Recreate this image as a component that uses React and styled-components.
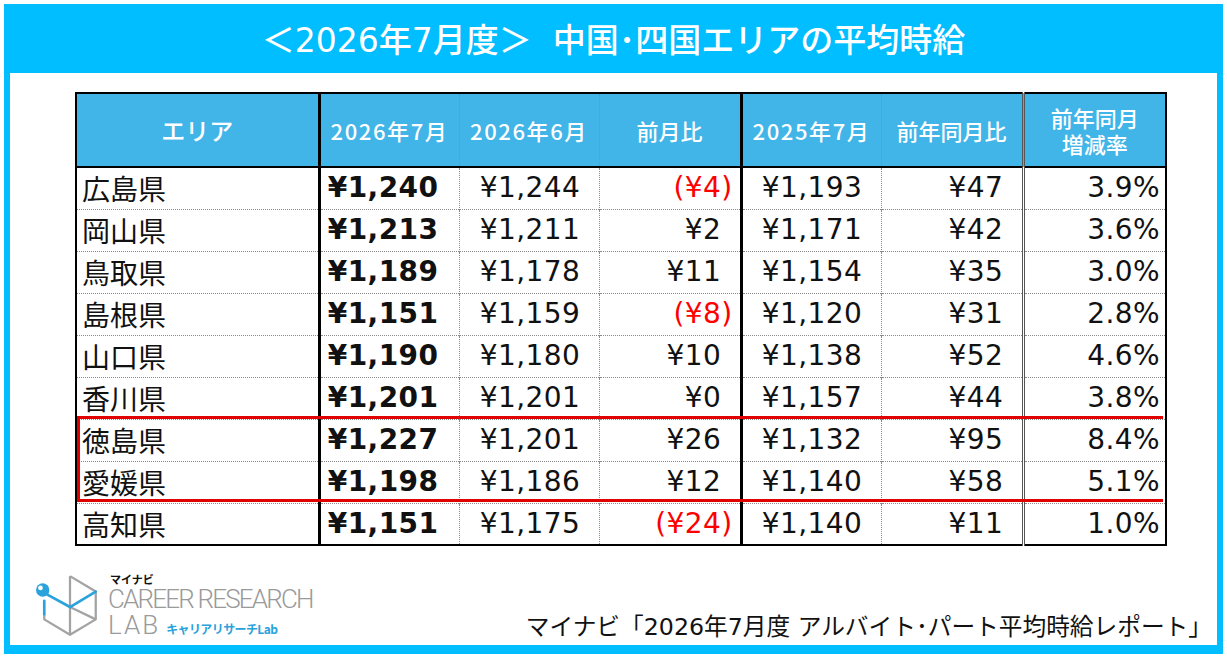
import React from 'react';
import styled, { createGlobalStyle } from 'styled-components';

const GlobalStyle = createGlobalStyle`
  html, body { margin: 0; padding: 0; background: #fff; }
  body { font-family: "Noto Sans CJK JP", "Noto Sans", sans-serif; color: #111; }
  * { box-sizing: border-box; }
`;

const CYAN = '#00BEFF';
const HEAD = '#41B5E8';
const MIXED = '"DejaVu Sans", "Noto Sans CJK JP", sans-serif';

const Page = styled.div`
  width: 1227px;
  height: 657px;
  padding: 4px 4px 0 4px;
  background: #fff;
`;

const Frame = styled.div`
  width: 1219px;
  height: 650px;
  border: 6px solid ${CYAN};
  border-top: 0;
  border-bottom-width: 9px;
  display: flex;
  flex-direction: column;
  background: #fff;
`;

const TitleBar = styled.div`
  height: 69px;
  background: ${CYAN};
  display: flex;
  align-items: center;
  justify-content: center;
  color: #fff;
  font-family: ${MIXED};
  font-size: 33px;
  font-weight: 500;
  white-space: pre;
  padding-bottom: 2px;
`;

const Content = styled.div`
  flex: 1;
  display: flex;
  flex-direction: column;
  padding: 19px 0 0 65px;
`;

const TableWrap = styled.div`
  position: relative;
  width: 1090px;
`;

const Table = styled.table`
  border-collapse: collapse;
  table-layout: fixed;
  width: 1090px;
  border: 2px solid #000;
`;

const sepStyle = {
  thick: '3px solid #000',
  dotted: '1px dotted #8a8a8a',
  double: '3px double #555',
  none: 'none',
};

const Th = styled.th`
  height: 74px;
  background: ${HEAD};
  color: #fff;
  font-weight: 500;
  font-size: ${(p) => p.$size || 22}px;
  letter-spacing: ${(p) => p.$ls || 0}px;
  line-height: 26px;
  text-align: center;
  padding: 0;
  border-right: ${(p) => sepStyle[p.$sep]};
  border-bottom: 2px solid #000;
`;

const Td = styled.td`
  height: 42px;
  padding: 0 ${(p) => p.$pr ?? 7}px 0 ${(p) => p.$pl ?? 0}px;
  text-align: ${(p) => p.$align || 'right'};
  font-family: ${(p) => (p.$cjk ? '"Noto Sans CJK JP", sans-serif' : MIXED)};
  font-size: 28px;
  letter-spacing: ${(p) => (p.$cjk ? 0 : 0.4)}px;
  font-weight: ${(p) => (p.$bold ? 700 : 400)};
  line-height: 1;
  color: #111;
  white-space: nowrap;
  border-right: ${(p) => sepStyle[p.$sep]};
  border-top: 1px dotted #8a8a8a;
`;

const Neg = styled.span`
  color: #f00;
`;

const Ghost = styled.span`
  visibility: hidden;
`;

const Highlight = styled.div`
  position: absolute;
  left: 2px;
  right: 2px;
  top: 324px;
  height: 86px;
  border: 3px solid #e00000;
  border-right: 0;
  pointer-events: none;
`;

const Footer = styled.div`
  margin-top: auto;
  display: flex;
  align-items: flex-end;
  justify-content: space-between;
  padding: 0 5px 3px 25px;
`;

const Logo = styled.div`
  display: flex;
  align-items: flex-start;
  gap: 3px;
`;

const LogoText = styled.div`
  display: flex;
  flex-direction: column;
  padding-top: 1px;
`;

const LogoSmall = styled.div`
  font-size: 11px;
  font-weight: 700;
  line-height: 14px;
  color: #111;
  margin-left: 2px;
`;

const LogoBig = styled.div`
  font-family: "Roboto", "Open Sans", sans-serif;
  font-weight: 300;
  font-size: 26px;
  letter-spacing: -1.8px;
  line-height: 26px;
  color: #9a9a9a;
  display: flex;
  align-items: baseline;
  gap: 6px;
`;

const LogoWide = styled.span`
  letter-spacing: 2px;
`;

const LogoKana = styled.span`
  font-family: "Noto Sans CJK JP", sans-serif;
  font-weight: 700;
  font-size: 12px;
  letter-spacing: -0.6px;
  color: #2aa2dc;
`;

const Source = styled.div`
  font-family: ${MIXED};
  font-size: 23.7px;
  color: #111;
  line-height: 30px;
  white-space: pre;
`;

const cols = [
  { sep: 'thick' },
  { sep: 'dotted' },
  { sep: 'dotted' },
  { sep: 'thick' },
  { sep: 'dotted' },
  { sep: 'double' },
  { sep: 'none' },
];

const rows = [
  ['広島県', '¥1,240', '¥1,244', -4, '¥1,193', '¥47', '3.9%'],
  ['岡山県', '¥1,213', '¥1,211', 2, '¥1,171', '¥42', '3.6%'],
  ['鳥取県', '¥1,189', '¥1,178', 11, '¥1,154', '¥35', '3.0%'],
  ['島根県', '¥1,151', '¥1,159', -8, '¥1,120', '¥31', '2.8%'],
  ['山口県', '¥1,190', '¥1,180', 10, '¥1,138', '¥52', '4.6%'],
  ['香川県', '¥1,201', '¥1,201', 0, '¥1,157', '¥44', '3.8%'],
  ['徳島県', '¥1,227', '¥1,201', 26, '¥1,132', '¥95', '8.4%'],
  ['愛媛県', '¥1,198', '¥1,186', 12, '¥1,140', '¥58', '5.1%'],
  ['高知県', '¥1,151', '¥1,175', -24, '¥1,140', '¥11', '1.0%'],
];

const Money = ({ children }) => (
  <>
    {children}
    <Ghost>)</Ghost>
  </>
);

const Diff = ({ v }) =>
  v < 0 ? <Neg>(¥{Math.abs(v)})</Neg> : <Money>¥{v}</Money>;

const LogoIcon = () => (
  <svg width="70" height="70" viewBox="0 0 68 68" aria-hidden="true">
    <g fill="none" stroke="#a3a3a3" strokeWidth="2.2" strokeLinejoin="round">
      <path d="M34 5 L59 20 L59 47 L34 62 L9 47 L9 42" />
      <path d="M34 5 L34 62" />
      <path d="M34 35 L59 47" />
    </g>
    <g fill="none" stroke="#2aa2dc" strokeWidth="2.6" strokeLinecap="round" strokeLinejoin="round">
      <path d="M12 23 L34 35 L59 20" />
      <path d="M9 29 L9 42" />
    </g>
    <circle cx="7.5" cy="18.5" r="6.5" fill="#2aa2dc" />
    <circle cx="5.3" cy="16.4" r="2.3" fill="#fff" />
  </svg>
);

export default function App() {
  return (
    <>
      <GlobalStyle />
      <Page>
        <Frame>
          <TitleBar>{'＜2026年7月度＞  中国･四国エリアの平均時給'}</TitleBar>
          <Content>
            <TableWrap>
              <Table>
                <colgroup>
                  <col style={{ width: 243 }} />
                  <col style={{ width: 140 }} />
                  <col style={{ width: 140 }} />
                  <col style={{ width: 142 }} />
                  <col style={{ width: 140 }} />
                  <col style={{ width: 142 }} />
                  <col style={{ width: 143 }} />
                </colgroup>
                <thead>
                  <tr>
                    <Th $sep="thick" $size={24}>エリア</Th>
                    <Th $sep="dotted" $ls={1.6}>2026年7月</Th>
                    <Th $sep="dotted" $ls={1.6}>2026年6月</Th>
                    <Th $sep="thick">前月比</Th>
                    <Th $sep="dotted" $ls={1.6}>2025年7月</Th>
                    <Th $sep="double">前年同月比</Th>
                    <Th $sep="none">
                      前年同月
                      <br />
                      増減率
                    </Th>
                  </tr>
                </thead>
                <tbody>
                  {rows.map((r) => (
                    <tr key={r[0]}>
                      <Td $sep={cols[0].sep} $cjk $align="left" $pl={5}>
                        {r[0]}
                      </Td>
                      <Td $sep={cols[1].sep} $bold>
                        <Money>{r[1]}</Money>
                      </Td>
                      <Td $sep={cols[2].sep}>
                        <Money>{r[2]}</Money>
                      </Td>
                      <Td $sep={cols[3].sep}>
                        <Diff v={r[3]} />
                      </Td>
                      <Td $sep={cols[4].sep}>
                        <Money>{r[4]}</Money>
                      </Td>
                      <Td $sep={cols[5].sep}>
                        <Money>{r[5]}</Money>
                      </Td>
                      <Td $sep={cols[6].sep} $pr={5}>
                        {r[6]}
                      </Td>
                    </tr>
                  ))}
                </tbody>
              </Table>
              <Highlight />
            </TableWrap>
          </Content>
          <Footer>
            <Logo>
              <LogoIcon />
              <LogoText>
                <LogoSmall>マイナビ</LogoSmall>
                <LogoBig>CAREER RESEARCH</LogoBig>
                <LogoBig>
                  <LogoWide>LAB</LogoWide>
                  <LogoKana>キャリアリサーチLab</LogoKana>
                </LogoBig>
              </LogoText>
            </Logo>
            <Source>{'マイナビ「2026年7月度 アルバイト･パート平均時給レポート」'}</Source>
          </Footer>
        </Frame>
      </Page>
    </>
  );
}
